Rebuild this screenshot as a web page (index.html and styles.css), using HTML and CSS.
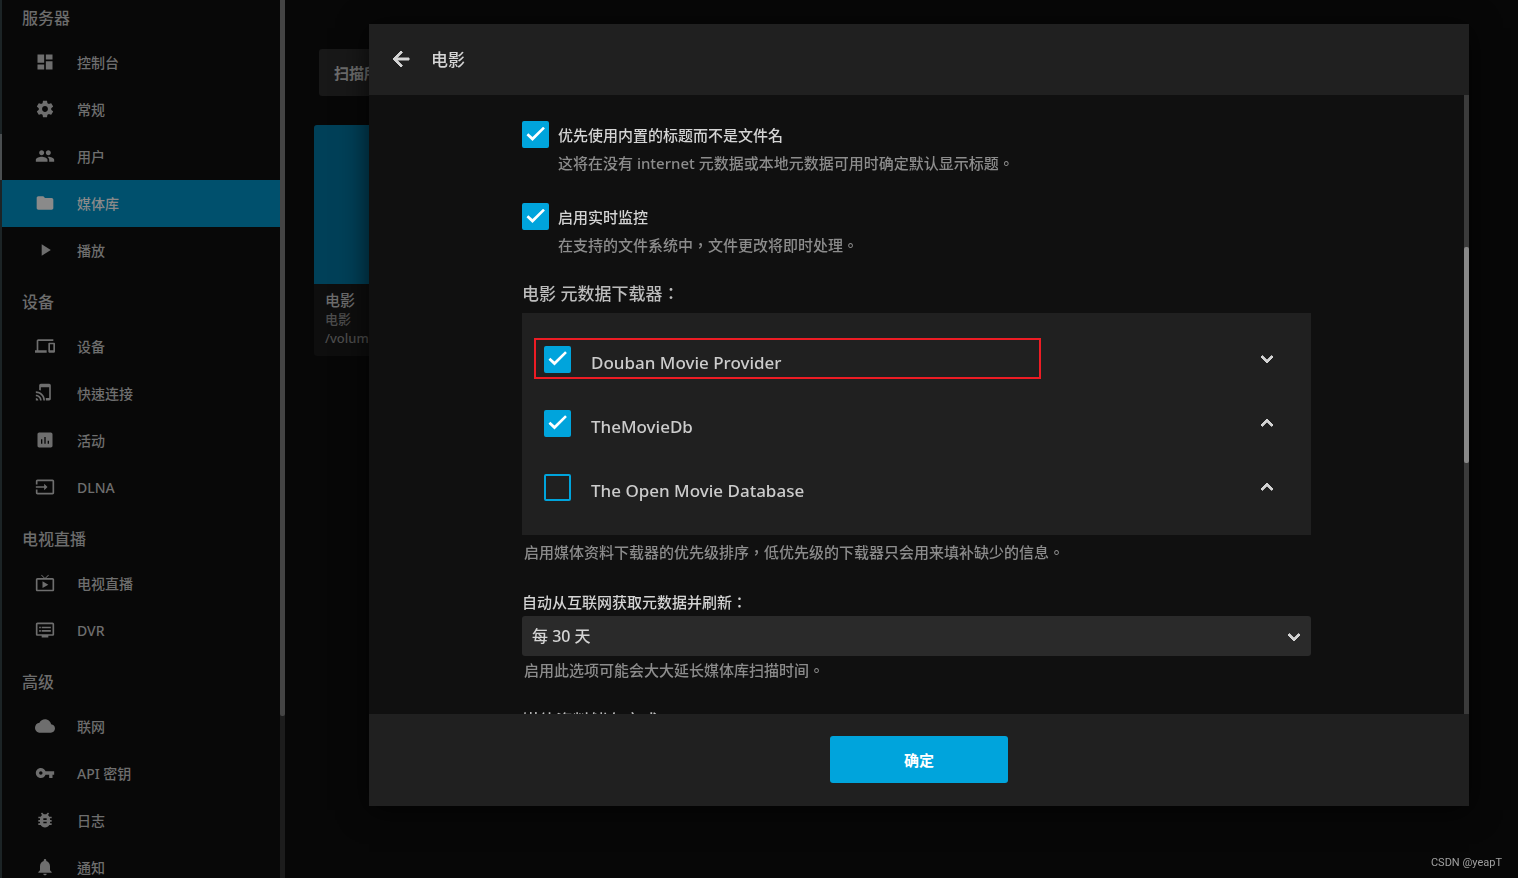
FILE: index.html
```html
<!DOCTYPE html>
<html lang="zh-TW">
<head>
<meta charset="utf-8">
<title>媒体库</title>
<link rel="stylesheet" href="styles.css">
</head>
<body>
<div class="app">
  <div class="edge"><span class="edge-light"></span></div>
  <nav class="sidebar">
    <div class="menu">
      <h2 class="menu-heading">服务器</h2>
      <a class="menu-item" href="#"><svg class="icon" viewBox="0 0 24 24"><path d="M3 13h8V3H3v10zm0 8h8v-6H3v6zm10 0h8V11h-8v10zm0-18v6h8V3h-8z"/></svg>控制台</a>
      <a class="menu-item" href="#"><svg class="icon" viewBox="0 0 24 24"><path d="M19.43 12.98c.04-.32.07-.64.07-.98s-.03-.66-.07-.98l2.11-1.65c.19-.15.24-.42.12-.64l-2-3.46c-.12-.22-.39-.3-.61-.22l-2.49 1c-.52-.4-1.08-.73-1.69-.98l-.38-2.65C14.46 2.18 14.25 2 14 2h-4c-.25 0-.46.18-.49.42l-.38 2.65c-.61.25-1.17.59-1.69.98l-2.49-1c-.23-.09-.49 0-.61.22l-2 3.46c-.13.22-.07.49.12.64l2.11 1.65c-.04.32-.07.65-.07.98s.03.66.07.98l-2.11 1.65c-.19.15-.24.42-.12.64l2 3.46c.12.22.39.3.61.22l2.49-1c.52.4 1.08.73 1.69.98l.38 2.65c.03.24.24.42.49.42h4c.25 0 .46-.18.49-.42l.38-2.65c.61-.25 1.17-.59 1.69-.98l2.49 1c.23.09.49 0 .61-.22l2-3.46c.12-.22.07-.49-.12-.64l-2.11-1.65zM12 15.500c-1.930 0-3.500-1.570-3.500-3.500s1.570-3.500 3.500-3.500 3.500 1.570 3.500 3.500-1.570 3.500-3.500 3.500z"/></svg>常规</a>
      <a class="menu-item" href="#"><svg class="icon" viewBox="0 0 24 24"><path d="M16 11c1.660 0 2.990-1.340 2.990-3S17.660 5 16 5s-3 1.340-3 3 1.340 3 3 3zm-8 0c1.660 0 2.990-1.340 2.990-3S9.660 5 8 5 5 6.340 5 8s1.340 3 3 3zm0 2c-2.330 0-7 1.170-7 3.500V19h14v-2.500c0-2.330-4.670-3.500-7-3.500zm8 0c-.29 0-.62.02-.97.05 1.160.84 1.970 1.970 1.970 3.450V19h6v-2.500c0-2.330-4.670-3.500-7-3.500z"/></svg>用户</a>
      <a class="menu-item active" href="#"><svg class="icon" viewBox="0 0 24 24"><path d="M10 4H4c-1.100 0-1.990.9-1.990 2L2 18c0 1.100.9 2 2 2h16c1.100 0 2-.9 2-2V8c0-1.100-.9-2-2-2h-8l-2-2z"/></svg>媒体库</a>
      <a class="menu-item" href="#"><svg class="icon" viewBox="0 0 24 24"><path d="M8 5v14l11-7z"/></svg>播放</a>
      <h2 class="menu-heading">设备</h2>
      <a class="menu-item" href="#"><svg class="icon" viewBox="0 0 24 24"><path d="M4 6h18V4H4c-1.100 0-2 .9-2 2v11H0v3h14v-3H4V6zm19 2h-6c-.55 0-1 .45-1 1v10c0 .55.45 1 1 1h6c.55 0 1-.45 1-1V9c0-.55-.45-1-1-1zm-1 9h-4v-7h4v7z"/></svg>设备</a>
      <a class="menu-item" href="#"><svg class="icon" viewBox="0 0 24 24"><path d="M1 18v3h3c0-1.660-1.340-3-3-3zm0-4v2c2.760 0 5 2.240 5 5h2c0-3.870-3.130-7-7-7zm0-4v2c4.970 0 9 4.030 9 9h2c0-6.080-4.930-11-11-11zM17 1H7c-1.100 0-2 .9-2 2v5.300c.71.16 1.380.36 2 .62V5h10v13h-4.100c.2.840.1 1.900.1 3h4c1.100 0 2-.9 2-2V3c0-1.100-.9-2-2-2z"/></svg>快速连接</a>
      <a class="menu-item" href="#"><svg class="icon" viewBox="0 0 24 24"><path d="M19 3H5c-1.100 0-2 .9-2 2v14c0 1.100.9 2 2 2h14c1.100 0 2-.9 2-2V5c0-1.100-.9-2-2-2zM8.800 16.500H7.200V11h1.600v5.500zm4 0h-1.600V8.500h1.600v8zm4 0h-1.600V13h1.600v3.500z"/></svg>活动</a>
      <a class="menu-item" href="#"><svg class="icon" viewBox="0 0 24 24"><path d="M21 3H3c-1.100 0-2 .9-2 2v4h2V5h18v14H3v-4H1v4c0 1.100.9 2 2 2h18c1.100 0 2-.9 2-2V5c0-1.100-.9-2-2-2zM11 16l4-4-4-4v3H1v2h10v3z"/></svg>DLNA</a>
      <h2 class="menu-heading">电视直播</h2>
      <a class="menu-item" href="#"><svg class="icon" viewBox="0 0 24 24"><path d="M21 6h-7.590l3.290-3.290L16 2l-4 4-4-4-.7.710L10.590 6H3c-1.100 0-2 .9-2 2v12c0 1.100.9 2 2 2h18c1.100 0 2-.9 2-2V8c0-1.100-.9-2-2-2zm0 14H3V8h18v12zM9 10v8l7-4z"/></svg>电视直播</a>
      <a class="menu-item" href="#"><svg class="icon" viewBox="0 0 24 24"><path d="M21 3H3c-1.100 0-2 .9-2 2v12c0 1.100.9 2 2 2h5v2h8v-2h5c1.100 0 1.990-.9 1.990-2L23 5c0-1.100-.9-2-2-2zm0 14H3V5h18v12zm-2-9H8v2h11V8zm0 4H8v2h11v-2zM7 8H5v2h2V8zm0 4H5v2h2v-2z"/></svg>DVR</a>
      <h2 class="menu-heading">高级</h2>
      <a class="menu-item" href="#"><svg class="icon" viewBox="0 0 24 24"><path d="M19.350 10.040C18.670 6.590 15.640 4 12 4 9.110 4 6.600 5.640 5.350 8.040 2.340 8.360 0 10.910 0 14c0 3.310 2.690 6 6 6h13c2.760 0 5-2.240 5-5 0-2.640-2.050-4.780-4.650-4.960z"/></svg>联网</a>
      <a class="menu-item" href="#"><svg class="icon" viewBox="0 0 24 24"><path d="M12.650 10C11.830 7.670 9.610 6 7 6c-3.310 0-6 2.690-6 6s2.690 6 6 6c2.610 0 4.830-1.670 5.650-4H17v4h4v-4h2v-4H12.650zM7 14c-1.100 0-2-.9-2-2s.9-2 2-2 2 .9 2 2-.9 2-2 2z"/></svg>API 密钥</a>
      <a class="menu-item" href="#"><svg class="icon" viewBox="0 0 24 24"><path d="M20 8h-2.810c-.45-.78-1.070-1.450-1.820-1.960L17 4.410 15.590 3l-2.170 2.170C12.960 5.060 12.490 5 12 5c-.49 0-.96.06-1.410.17L8.410 3 7 4.410l1.620 1.630C7.880 6.550 7.260 7.220 6.810 8H4v2h2.090c-.05.33-.09.66-.09 1v1H4v2h2v1c0 .34.04.67.09 1H4v2h2.810c1.040 1.790 2.970 3 5.190 3s4.150-1.210 5.190-3H20v-2h-2.090c.05-.33.09-.66.09-1v-1h2v-2h-2v-1c0-.34-.04-.67-.09-1H20V8zm-6 8h-4v-2h4v2zm0-4h-4v-2h4v2z"/></svg>日志</a>
      <a class="menu-item" href="#"><svg class="icon" viewBox="0 0 24 24"><path d="M12 22c1.100 0 2-.9 2-2h-4c0 1.100.89 2 2 2zm6-6v-5c0-3.070-1.640-5.640-4.500-6.320V4c0-.83-.67-1.500-1.500-1.500s-1.500.67-1.500 1.500v.68C7.630 5.360 6 7.920 6 11v5l-2 2v1h16v-1l-2-2z"/></svg>通知</a>
    </div>
  </nav>
  <div class="side-scroll"><span class="side-thumb"></span></div>
  <main class="page">
    <button class="scan" type="button">扫描所有媒体库</button>
    <article class="library">
      <div class="library-cover"></div>
      <div class="library-text">
        <h3 class="library-name">电影</h3>
        <p class="library-line">电影</p>
        <p class="library-line">/volume1/video</p>
      </div>
    </article>
  </main>
</div>

<section class="dialog" role="dialog" aria-labelledby="dialog-title">
  <header class="dialog-header">
    <button class="icon-button" type="button" aria-label="返回"><svg class="back-icon" viewBox="0 0 24 24"><path d="M20 11H7.830l5.590-5.590L12 4l-8 8 8 8 1.410-1.410L7.830 13H20v-2z"/></svg></button>
    <h1 class="dialog-title" id="dialog-title">电影</h1>
  </header>
  <div class="dialog-main">
    <form class="form" id="library-form">
      <div class="options">
        <div class="option">
          <div class="option-row"><input class="check" type="checkbox" id="embedded" checked><label class="label" for="embedded">优先使用内置的标题而不是文件名</label></div>
          <p class="help option-help">这将在没有 internet 元数据或本地元数据可用时确定默认显示标题。</p>
        </div>
        <div class="option">
          <div class="option-row"><input class="check" type="checkbox" id="monitor" checked><label class="label" for="monitor">启用实时监控</label></div>
          <p class="help option-help">在支持的文件系统中，文件更改将即时处理。</p>
        </div>
      </div>
      <h2 class="form-heading">电影 元数据下载器：</h2>
      <ul class="providers">
        <li class="provider">
          <input class="check" type="checkbox" id="douban" checked><label class="provider-name" for="douban">Douban Movie Provider</label>
          <button class="icon-button" type="button" aria-label="下移"><svg class="chevron" viewBox="0 0 24 24"><path d="M7.410 8.590L12 13.170l4.590-4.580L18 10l-6 6-6-6z"/></svg></button>
          <span class="highlight"></span>
        </li>
        <li class="provider">
          <input class="check" type="checkbox" id="tmdb" checked><label class="provider-name" for="tmdb">TheMovieDb</label>
          <button class="icon-button" type="button" aria-label="上移"><svg class="chevron" viewBox="0 0 24 24"><path d="M12 8l-6 6 1.410 1.410L12 10.830l4.590 4.580L18 14z"/></svg></button>
        </li>
        <li class="provider">
          <input class="check" type="checkbox" id="omdb"><label class="provider-name" for="omdb">The Open Movie Database</label>
          <button class="icon-button" type="button" aria-label="上移"><svg class="chevron" viewBox="0 0 24 24"><path d="M12 8l-6 6 1.410 1.410L12 10.830l4.590 4.580L18 14z"/></svg></button>
        </li>
      </ul>
      <p class="help providers-help">启用媒体资料下载器的优先级排序，低优先级的下载器只会用来填补缺少的信息。</p>
      <label class="label select-label" for="refresh">自动从互联网获取元数据并刷新：</label>
      <div class="select-wrap">
        <select class="select" id="refresh"><option>每 30 天</option></select>
        <svg class="chevron select-arrow" viewBox="0 0 24 24"><path d="M7.410 8.590L12 13.170l4.590-4.580L18 10l-6 6-6-6z"/></svg>
      </div>
      <p class="help">启用此选项可能会大大延长媒体库扫描时间。</p>
      <h2 class="form-heading">媒体资料储存方式：</h2>
    </form>
    <div class="dialog-scroll"><span class="dialog-thumb"></span></div>
  </div>
  <footer class="dialog-footer"><button class="submit" type="submit" form="library-form">确定</button></footer>
</section>
<div class="watermark">CSDN @yeapT</div>
</body>
</html>
```
FILE: styles.css
```css
* { box-sizing: border-box; }
body {
  margin: 0;
  background: #070707;
  color: #d4d4d4;
  font-family: "Noto Sans", "Noto Sans CJK TC", sans-serif;
  font-size: 15px;
  line-height: 24px;
  font-weight: 500;
  overflow: hidden;
}
h1, h2, h3, p, ul { margin: 0; padding: 0; font-weight: 500; }
button, select { font: inherit; color: inherit; border: 0; padding: 0; }
svg { fill: currentColor; }

.app { display: flex; height: 100vh; overflow: hidden; }
.edge { width: 2px; background: #1c2426; padding-top: 134px; }
.edge-light { display: block; height: 46px; background: #4a4e50; }
.sidebar { width: 278px; background: #080808; overflow: hidden; }
.menu { margin-top: -10px; }
.menu-heading {
  height: 49px;
  padding: 16px 20px 0;
  font-size: 16px;
  color: #6c6c6c;
}
.menu-item {
  display: flex;
  align-items: center;
  gap: 22px;
  height: 47px;
  padding: 0 0 0 33px;
  font-size: 14px;
  color: #6e6e6e;
  text-decoration: none;
}
.menu-item.active { background: #00506d; color: #8a8a8a; }
.icon { width: 20px; height: 20px; margin-bottom: 2px; }
.side-scroll { width: 5px; background: #1c1c1c; }
.side-thumb { display: block; height: 716px; background: #444; border-radius: 0 0 2px 2px; }

.page { flex: 1; padding: 49px 29px; }
.scan {
  display: block;
  width: 135px;
  height: 47px;
  margin-left: 5px;
  background: #181818;
  border-radius: 3px;
  color: #6c6c6c;
  font-weight: 700;
}
.library { width: 284px; margin-top: 29px; background: #0e0e0e; border-radius: 3px; overflow: hidden; }
.library-cover { height: 159px; background: #004058; }
.library-text { padding: 7px 11px 8px; }
.library-name { font-size: 15px; line-height: 19px; color: #6c6c6c; }
.library-line { font-size: 13px; line-height: 19px; color: #4c4c4c; }

.dialog {
  position: fixed;
  top: 24px;
  right: 49px;
  bottom: 72px;
  left: 369px;
  display: flex;
  flex-direction: column;
  background: #101010;
  box-shadow: 0 4px 28px rgba(0, 0, 0, 0.7);
}
.dialog-header {
  display: flex;
  align-items: center;
  gap: 18px;
  height: 71px;
  padding: 0 0 2px 20px;
  background: #202020;
}
.icon-button { display: flex; background: none; }
.back-icon { width: 24px; height: 24px; stroke: currentColor; stroke-width: 1; }
.dialog-title { padding-top: 2px; font-size: 17px; }
.dialog-main { flex: 1; min-height: 0; display: flex; }
.form { flex: 1; padding: 26px 153px 0; overflow: hidden; }
.dialog-scroll { width: 5px; padding-top: 152px; background: #3b3b3b; }
.dialog-thumb { display: block; height: 216px; background: #888; border-radius: 2px; }

.options { display: flex; flex-direction: column; gap: 28px; }
.option-row { display: flex; align-items: center; gap: 9px; }
.check {
  appearance: none;
  display: grid;
  place-items: center;
  width: 27px;
  height: 27px;
  margin: 0;
  border: 2px solid #00a4dc;
  border-radius: 2px;
}
.check:checked { background: #00a4dc; }
.check:checked::before {
  content: "";
  width: 20px;
  height: 16px;
  background: #fff;
  clip-path: polygon(5% 54%, 14% 42%, 35% 66%, 88% 2%, 97% 13%, 35% 90%);
}
.help { padding: 2px; color: #8c8c8c; }
.option-help { padding: 3px 0 0 36px; }
.form-heading { margin: 25px 0 7px; font-size: 17px; color: #bcbcbc; }
.providers { padding: 14px 22px 16px; background: #202020; list-style: none; }
.provider {
  position: relative;
  display: flex;
  align-items: center;
  height: 64px;
  gap: 20px;
}
.provider-name { flex: 1; padding-top: 8px; font-size: 17px; color: #ccc; }
.provider .icon-button { margin-right: 10px; }
.chevron { width: 24px; height: 24px; stroke: currentColor; stroke-width: 1; }
.highlight {
  position: absolute;
  left: -10px;
  top: 11px;
  width: 507px;
  height: 41px;
  border: 2px solid #ed1c24;
  pointer-events: none;
}
.providers-help { padding-top: 5px; }
.select-label { display: block; margin: 24px 0 2px; }
.select-wrap { position: relative; }
.select {
  appearance: none;
  width: 100%;
  height: 40px;
  padding: 0 10px;
  border-radius: 3px;
  background: #2a2a2a;
  font-size: 16px;
}
.select-arrow { position: absolute; top: 9px; right: 5px; pointer-events: none; }

.dialog-footer { display: flex; justify-content: center; height: 92px; padding-top: 22px; background: #202020; }
.submit { width: 178px; height: 47px; border-radius: 3px; background: #00a4dc; color: #fff; font-weight: 700; }
.watermark {
  position: fixed;
  right: 16px;
  bottom: 7px;
  font: 11px/16px Roboto, sans-serif;
  color: #a0a0a0;
}
```
